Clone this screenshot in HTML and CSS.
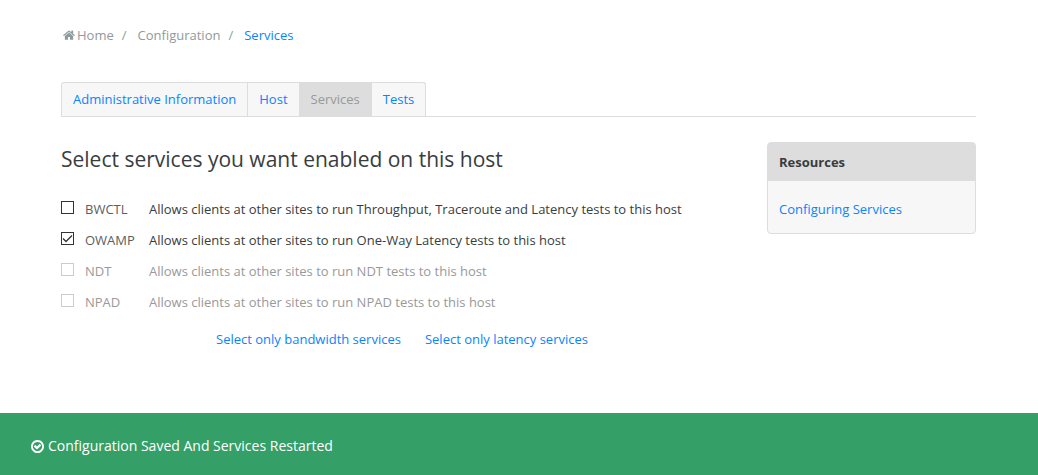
FILE: index.html
```html
<!DOCTYPE html>
<html lang="en">
<head>
<meta charset="utf-8">
<meta name="viewport" content="width=device-width, initial-scale=1">
<title>Services</title>
<link rel="stylesheet" href="styles.css">
</head>
<body class="page">
<div class="container">
  <nav aria-label="Breadcrumb">
    <ol class="breadcrumbs">
      <li class="crumb"><a class="crumb-link crumb-home" href="#"><svg class="home-icon" viewBox="0 192 1664 1344" aria-hidden="true"><path d="M1408 992v480q0 26-19 45t-45 19h-384v-384h-256v384h-384q-26 0-45-19t-19-45v-480q0-1 .5-3t.5-3l575-474 575 474q1 2 1 6zm223-69l-62 74q-8 9-21 11h-3q-13 0-21-7l-692-577-692 577q-12 8-24 7-13-2-21-11l-62-74q-8-10-7-23.5t11-21.5l719-599q32-26 76-26t76 26l244 204v-195q0-14 9-23t23-9h192q14 0 23 9t9 23v408l219 182q10 8 11 21.5t-7 23.5z"/></svg>Home</a></li>
      <li class="crumb"><a class="crumb-link" href="#">Configuration</a></li>
      <li class="crumb"><a class="crumb-link crumb-current" href="#" aria-current="page">Services</a></li>
    </ol>
  </nav>
  <nav class="tab-bar" aria-label="Configuration">
    <ul class="tabs">
      <li class="tab"><a class="tab-link" href="#">Administrative Information</a></li>
      <li class="tab"><a class="tab-link" href="#">Host</a></li>
      <li class="tab"><a class="tab-link tab-active" href="#">Services</a></li>
      <li class="tab"><a class="tab-link" href="#">Tests</a></li>
    </ul>
  </nav>
  <div class="columns">
    <main class="main">
      <h1 class="title">Select services you want enabled on this host</h1>
      <form class="services">
        <div class="service">
          <input class="check" type="checkbox" id="bwctl">
          <label class="name" for="bwctl">BWCTL</label>
          <span class="description">Allows clients at other sites to run Throughput, Traceroute and Latency tests to this host</span>
        </div>
        <div class="service">
          <input class="check" type="checkbox" id="owamp" checked>
          <label class="name" for="owamp">OWAMP</label>
          <span class="description">Allows clients at other sites to run One-Way Latency tests to this host</span>
        </div>
        <div class="service service-disabled">
          <input class="check" type="checkbox" id="ndt" disabled>
          <label class="name" for="ndt">NDT</label>
          <span class="description">Allows clients at other sites to run NDT tests to this host</span>
        </div>
        <div class="service service-disabled">
          <input class="check" type="checkbox" id="npad" disabled>
          <label class="name" for="npad">NPAD</label>
          <span class="description">Allows clients at other sites to run NPAD tests to this host</span>
        </div>
      </form>
      <div class="shortcuts">
        <a class="link" href="#">Select only bandwidth services</a>
        <a class="link" href="#">Select only latency services</a>
      </div>
    </main>
    <aside class="resources">
      <h2 class="resources-title">Resources</h2>
      <div class="resources-body"><a class="link" href="#">Configuring Services</a></div>
    </aside>
  </div>
</div>
<footer class="status" role="status">
  <svg class="status-icon" viewBox="128 128 1536 1536" aria-hidden="true"><path d="M1299 813l-422 422q-19 19-45 19t-45-19l-294-294q-19-19-19-45t19-45l102-102q19-19 45-19t45 19l147 147 275-275q19-19 45-19t45 19l102 102q19 19 19 45t-19 45zm141 83q0-148-73-273t-198-198-273-73-273 73-198 198-73 273 73 273 198 198 273 73 273-73 198-198 73-273zm224 0q0 209-103 385.5t-279.5 279.5-385.5 103-385.5-103-279.5-279.5-103-385.5 103-385.5 279.5-279.5 385.5-103 385.5 103 279.5 279.5 103 385.5z"/></svg>
  <span>Configuration Saved And Services Restarted</span>
</footer>
</body>
</html>
```
FILE: styles.css
```css
* {
  box-sizing: border-box;
}

.page {
  display: flex;
  flex-direction: column;
  min-height: 100vh;
  margin: 0;
  background: #fff;
  color: #383d40;
  font: 13px/20px "Open Sans", sans-serif;
}

.container {
  padding: 25px 62px 32px 61px;
}

.link,
.tab-link,
.crumb-link {
  color: #0a84ff;
  text-decoration: none;
}

.breadcrumbs,
.tabs {
  display: flex;
  margin: 0;
  padding: 0;
  list-style: none;
}

.breadcrumbs {
  padding-left: 2px;
  color: #8f999b;
}

.crumb + .crumb::before {
  content: "/";
  padding: 0 11px 0 8px;
}

.crumb-link {
  color: #8f9a9c;
}

.crumb-current {
  color: #0a84ff;
}

.crumb-home {
  display: flex;
  align-items: center;
  gap: 2px;
}

.crumb {
  display: flex;
}

.home-icon {
  width: 12px;
  height: 10px;
  fill: currentColor;
}

.tab-bar {
  display: flex;
  margin-top: 37px;
  border-bottom: 1px solid #ddd;
}

.tabs {
  border: 1px solid #ddd;
  border-bottom: 0;
  border-radius: 3px 3px 0 0;
  background: #f7f7f7;
}

.tab + .tab {
  border-left: 1px solid #ddd;
}

.tab-link {
  display: block;
  padding: 6px 11px 7px;
}

.tab-active {
  background: #ddd;
  color: #999;
}

.columns {
  display: flex;
  justify-content: space-between;
  align-items: flex-start;
  gap: 24px;
  padding-top: 25px;
}

.main {
  flex: 1;
}

.title {
  margin: 2px 0 25px;
  font-size: 21px;
  font-weight: 400;
  line-height: 30px;
}

.services {
  display: grid;
  gap: 11px;
}

.service {
  display: flex;
  align-items: flex-start;
}

.check {
  appearance: none;
  flex: none;
  width: 13px;
  height: 13px;
  margin: 2px 11px 0 0;
  border: 1px solid #333;
  background: #fff;
}

.check:checked {
  background: #fff url("data:image/svg+xml,%3Csvg xmlns='http://www.w3.org/2000/svg' viewBox='0 0 11 11'%3E%3Cpath d='M1 5.5l3 3L10 2.5' fill='none' stroke='%23333' stroke-width='1.3'/%3E%3C/svg%3E");
}

.check:disabled {
  border-color: #ccc;
}

.name {
  flex: none;
  width: 64px;
  color: #5a5e60;
}

.service-disabled,
.service-disabled .name {
  color: #999;
}

.shortcuts {
  display: flex;
  justify-content: center;
  gap: 24px;
  margin-top: 17px;
}

.resources {
  flex: none;
  width: 209px;
  border: 1px solid #ddd;
  border-radius: 4px;
  background: #f7f7f7;
}

.resources-title {
  margin: 0;
  padding: 9px 11px;
  background: #ddd;
  font-size: 13px;
  font-weight: 700;
  line-height: 20px;
}

.resources-body {
  padding: 18px 11px 14px;
}

.status {
  display: flex;
  align-items: center;
  gap: 4px;
  margin-top: auto;
  padding: 23px 31px 19px;
  background: #349f67;
  color: #fff;
  font-size: 14px;
}

.status-icon {
  width: 13px;
  height: 13px;
  fill: currentColor;
}
```
